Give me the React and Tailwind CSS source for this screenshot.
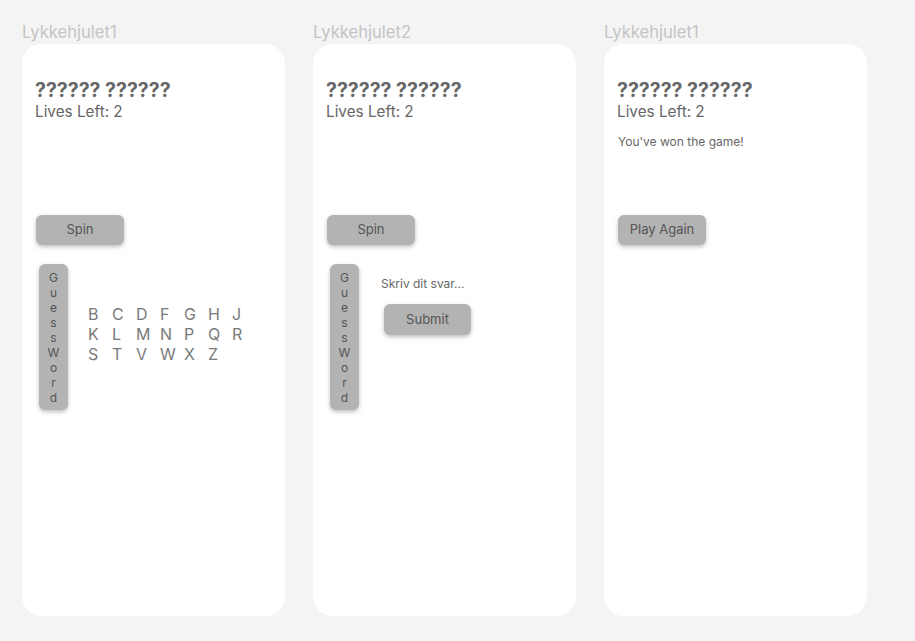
import React from "react";

const letters = ["B", "C", "D", "F", "G", "H", "J", "K", "L", "M", "N", "P", "Q", "R", "S", "T", "V", "W", "X", "Z"];

const GrayButton = ({ children, className = "" }) => (
  <button
    className={`flex items-center justify-center rounded-md bg-[#b3b3b3] text-[13px] text-[#555] shadow-[0_2px_4px_rgba(0,0,0,0.25)] ${className}`}
  >
    {children}
  </button>
);

const GuessWord = () => (
  <div className="flex h-[146px] w-[29px] shrink-0 flex-col items-center justify-center rounded-md bg-[#b3b3b3] text-[12px] leading-[15px] text-[#555] shadow-[0_2px_4px_rgba(0,0,0,0.25)]">
    {"GuessWord".split("").map((c, i) => (
      <span key={i}>{c}</span>
    ))}
  </div>
);

const Header = () => (
  <div>
    <h1 className="text-[19.5px] font-bold leading-6 text-[#666]">?????? ??????</h1>
    <p className="text-[15.3px] leading-5 text-[#666]">Lives Left: 2</p>
  </div>
);

const Frame = ({ label, children }) => (
  <div className="flex flex-col">
    <div className="h-[22px] text-[16.6px] leading-5 text-[#c4c4c4]">{label}</div>
    <div className="h-[572px] w-[263px] rounded-[20px] bg-white px-[13px] pt-[34px]">{children}</div>
  </div>
);

export default function App() {
  return (
    <div className="flex min-h-screen gap-[28px] bg-[#f4f4f4] pl-[22px] pt-[22px] font-['Inter',sans-serif]">
      <Frame label="Lykkehjulet1">
        <Header />
        <div className="ml-[1px] mt-[93px]">
          <GrayButton className="h-[30px] w-[88px]">Spin</GrayButton>
        </div>
        <div className="ml-[4px] mt-[19px] flex items-start gap-[20px]">
          <GuessWord />
          <div className="mt-[40px] grid grid-cols-7 text-[16px] leading-5 text-[#7a7a7a]">
            {letters.map((l) => (
              <span key={l} className="w-6">
                {l}
              </span>
            ))}
          </div>
        </div>
      </Frame>

      <Frame label="Lykkehjulet2">
        <Header />
        <div className="ml-[1px] mt-[93px]">
          <GrayButton className="h-[30px] w-[88px]">Spin</GrayButton>
        </div>
        <div className="ml-[4px] mt-[19px] flex items-start gap-[22px]">
          <GuessWord />
          <div className="flex flex-col pt-[12px]">
            <span className="text-[12px] leading-4 text-[#666]">Skriv dit svar...</span>
            <GrayButton className="ml-[3px] mt-[12px] h-[31px] w-[87px]">Submit</GrayButton>
          </div>
        </div>
      </Frame>

      <Frame label="Lykkehjulet1">
        <Header />
        <p className="ml-[1px] mt-[12px] text-[12px] leading-4 text-[#666]">You've won the game!</p>
        <div className="ml-[1px] mt-[65px]">
          <GrayButton className="h-[30px] w-[88px]">Play Again</GrayButton>
        </div>
      </Frame>
    </div>
  );
}
